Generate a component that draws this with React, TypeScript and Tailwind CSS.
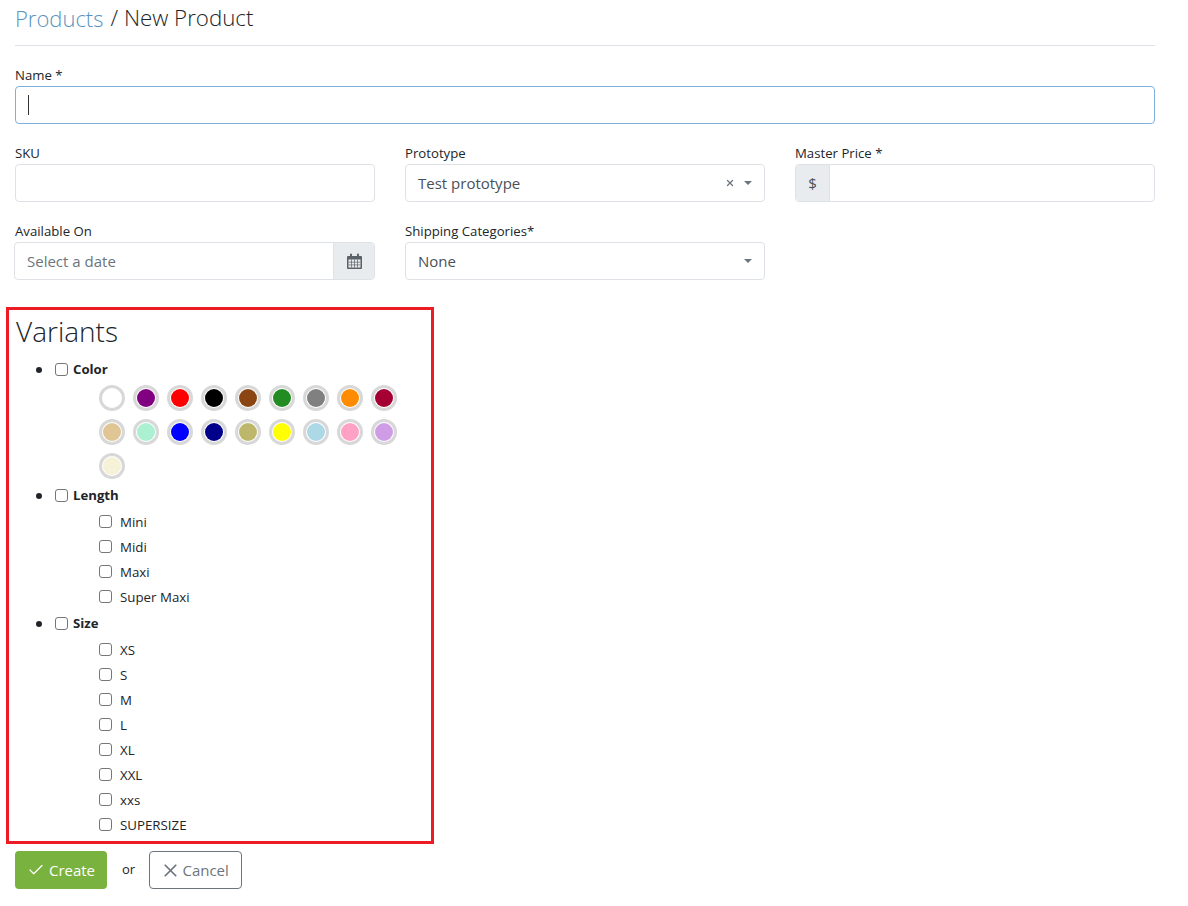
import { Check, X } from "lucide-react";

const colorsList = [
  "#ffffff", "#800080", "#ff0000", "#000000", "#8b4513", "#228b22", "#808080", "#ff8c00", "#a50034",
  "#e0c595", "#aaf0d1", "#0000ff", "#00008b", "#bdb76b", "#ffff00", "#add8e6", "#ffa0c5", "#cf9de6",
  "#f5f2d8",
];
const lengths = ["Mini", "Midi", "Maxi", "Super Maxi"];
const sizes = ["XS", "S", "M", "L", "XL", "XXL", "xxs", "SUPERSIZE"];

const inputCls = "h-[38px] w-full rounded-[4px] border border-[#dee2e6] bg-white";

function Box() {
  return <span className="block h-[13px] w-[13px] shrink-0 -translate-y-px rounded-[3px] border border-[#767676] bg-white" />;
}

function Caret() {
  return <span className="h-0 w-0 border-x-[4px] border-t-[4px] border-x-transparent border-t-[#6c757d]" />;
}

// fa4 style calendar, the icon packages only have the newer one
function CalendarIcon() {
  return (
    <svg width="15" height="16" viewBox="0 0 15 16" fill="none" className="text-[#5b6269]">
      <path d="M1 3h13a1 1 0 0 1 1 1v11a1 1 0 0 1-1 1H1a1 1 0 0 1-1-1V4a1 1 0 0 1 1-1z" fill="currentColor" />
      <rect x="3" y="0.5" width="2" height="4" rx="1" fill="currentColor" />
      <rect x="10" y="0.5" width="2" height="4" rx="1" fill="currentColor" />
      <path d="M1.5 6.5h12v8h-12z" fill="#e9ecef" />
      <path d="M1.5 9.2h12M1.5 11.9h12M4.5 6.5v8M7.5 6.5v8M10.5 6.5v8" stroke="currentColor" strokeWidth="0.7" />
    </svg>
  );
}

function VariantHead({ label }: { label: string }) {
  return (
    <div className="flex h-[20px] items-center">
      <span className="ml-[-19px] mr-[13px] h-[6px] w-[6px] rounded-full bg-[#212529]" />
      <Box />
      <b className="ml-[5px] text-[13.2px] font-bold">{label}</b>
    </div>
  );
}

function OptionList({ items }: { items: string[] }) {
  return (
    <div className="ml-[44px] mt-[4px]">
      {items.map((item) => (
        <div key={item} className="flex h-[25px] items-center gap-[8px] text-[13.3px]">
          <Box />
          <span>{item}</span>
        </div>
      ))}
    </div>
  );
}

export default function App() {
  return (
    <div className="min-h-[906px] w-[1188px] bg-white pl-[15px] font-['Open_Sans','Noto_Sans',sans-serif] text-[13.2px] text-[#212529]">
      <div className="w-[1140px]">
        <h1 className="flex h-[46px] items-start border-b border-[#dee2e6] pt-[2px] text-[22.3px] font-light leading-[32px]">
          <span className="text-[22px] text-[#5a93c0]">Products</span>
          <span className="ml-[7px]">/ New Product</span>
        </h1>

        <label className="mt-[20px] block h-[20px] leading-[19px]">Name *</label>
        <div className="flex h-[38px] items-center rounded-[4px] border border-[#7db0dc] pl-[12px]">
          <span className="h-[20px] w-px bg-[#333]" />
        </div>

        <div className="mt-[19px] grid grid-cols-3 gap-x-[30px] gap-y-[19px]">
          <div>
            <label className="block h-[21px] leading-[20px]">SKU</label>
            <div className={inputCls} />
          </div>
          <div>
            <label className="block h-[21px] leading-[20px]">Prototype</label>
            <div className={`${inputCls} flex items-center px-[12px] text-[15px] text-[#495057]`}>
              <span className="flex-1">Test prototype</span>
              <X size={10} strokeWidth={3} className="mr-[9px] text-[#6c757d]" />
              <Caret />
            </div>
          </div>
          <div>
            <label className="block h-[21px] leading-[20px]">Master Price *</label>
            <div className={`${inputCls} flex overflow-hidden`}>
              <span className="flex w-[34px] items-center justify-center border-r border-[#dee2e6] bg-[#e9ecef] text-[15px] text-[#495057]">$</span>
            </div>
          </div>
          <div>
            <label className="block h-[21px] leading-[20px]">Available On</label>
            <div className={`${inputCls} ml-[-1px] flex !w-[361px] overflow-hidden`}>
              <span className="flex flex-1 items-center pl-[12px] pt-px text-[15px] text-[#6c757d]">Select a date</span>
              <span className="flex w-[41px] items-center justify-center border-l border-[#dee2e6] bg-[#e9ecef]">
                <CalendarIcon />
              </span>
            </div>
          </div>
          <div>
            <label className="block h-[21px] leading-[20px]">Shipping Categories*</label>
            <div className={`${inputCls} flex items-center justify-between px-[12px] text-[15px] text-[#495057]`}>
              <span>None</span>
              <Caret />
            </div>
          </div>
        </div>

        <section className="ml-[-9px] mt-[27px] h-[537px] w-[428px] border-[3px] border-[#ed1c24] pl-[7px]">
          <h2 className="h-[41px] text-[28px] font-light leading-[42px]">Variants</h2>
          <div className="pl-[39px] pt-[9px]">
            <VariantHead label="Color" />
            <div className="ml-[44px] mt-[5px] flex w-[310px] flex-wrap gap-x-[8px] gap-y-[8px]">
              {colorsList.map((color) => (
                <span key={color} className="h-[26px] w-[26px] rounded-full border-[3px] border-[#d8d8d8] p-px">
                  <span className="block h-full w-full rounded-full" style={{ backgroundColor: color }} />
                </span>
              ))}
            </div>
            <div className="mt-[7px]">
              <VariantHead label="Length" />
              <OptionList items={lengths} />
            </div>
            <div className="mt-[4px]">
              <VariantHead label="Size" />
              <OptionList items={sizes} />
            </div>
          </div>
        </section>

        <div className="mt-[7px] flex items-center">
          <button className="flex h-[38px] w-[92px] items-center justify-center gap-[4px] rounded-[4px] bg-[#7ab23f] text-[15px] text-white">
            <Check size={18} strokeWidth={1.6} />
            Create
          </button>
          <span className="ml-[15px] text-[13px]">or</span>
          <button className="ml-[14px] flex h-[38px] w-[93px] items-center justify-center gap-[1px] rounded-[4px] border border-[#6c757d] pr-[2px] text-[15px] text-[#6c757d]">
            <X size={21} strokeWidth={2} />
            Cancel
          </button>
        </div>
      </div>
    </div>
  );
}
